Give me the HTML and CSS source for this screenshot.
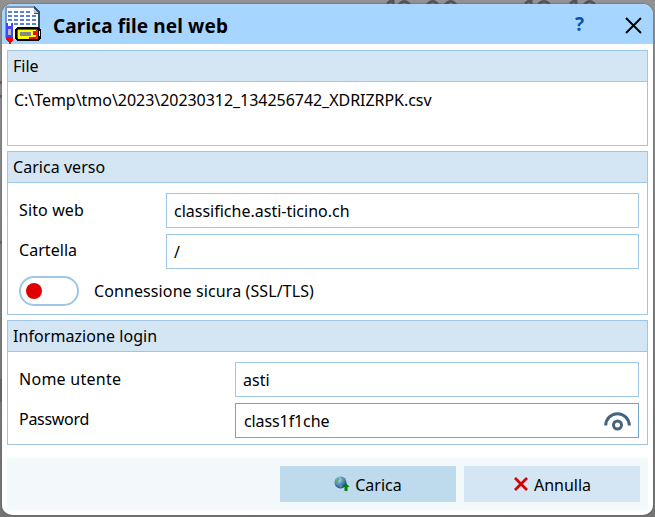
FILE: index.html
```
<!DOCTYPE html>
<html lang="it">
<head>
<meta charset="utf-8">
<title>Carica file nel web</title>
<link rel="stylesheet" href="styles.css">
</head>
<body>
<div class="backdrop" aria-hidden="true">
  <svg class="traces" width="216" height="4" viewBox="0 0 216 4" fill="none" stroke="#555" stroke-width="3">
    <path d="M4 4L9 0M10 0V4M16 5Q21 -2 27 5M44 5Q50 -2 55 5M62 5Q68 -2 73 5M142 4L147 0M148 0V4M155 5Q161 -2 167 5M187 4L192 0M193 0V4M201 5Q207 -2 212 5"/>
  </svg>
  <i class="mark mark-a"></i><i class="mark mark-b"></i><i class="mark mark-c"></i><i class="mark mark-d"></i>
</div>
<main class="dialog">
  <header class="titlebar">
    <svg class="app-icon" width="38" height="40" viewBox="0 0 38 40" shape-rendering="crispEdges">
      <path d="M2 3H29L34 9V35H2Z" fill="#fff"/>
      <path d="M1 2H29V4H2V34H0V3Z" fill="#8096b5"/>
      <path d="M29 2L35 8V24H33V10H29Z" fill="#344b73"/>
      <path d="M29 4V9H33Z" fill="#b7c8df"/>
      <path d="M3 8H27M3 12H31M3 16H31M3 20H31" stroke="#5683d4" stroke-width="2" stroke-dasharray="4 2"/>
      <path d="M1 19H3V21H6V19H8V33H1Z" fill="#4444ff"/>
      <path d="M3 19H6V22H3Z" fill="#fff"/>
      <path d="M3 25H6V31H3Z" fill="#bbb"/>
      <path d="M1 33H8V36L6 38V40H4V38L1 36Z" fill="red"/>
      <path d="M12 23H33L36 26V34L33 37H12L10 35V25Z" fill="#000"/>
      <path d="M13 25H31L33 27V35H13L12 34V26Z" fill="#e20"/>
      <path d="M13 26H31V35H13Z" fill="#ff0"/>
      <path d="M15 28H26V32H15Z" fill="#888"/>
      <path d="M28 27H31V31H28ZM24 33H31V35H24Z" fill="#e00"/>
      <path d="M34 27H35V32H34Z" fill="#fff"/>
    </svg>
    <h1><span class="t-title">Carica file nel web</span></h1>
    <span class="help">?</span>
    <svg class="close" width="17" height="17" viewBox="0 0 17 17"><path d="M1 1L16 16M16 1L1 16" stroke="#000" stroke-width="1.9"/></svg>
  </header>
  <section class="panel panel-file">
    <h2><span class="t-file">File</span></h2>
    <p class="path"><span class="t-path">C:\Temp\tmo\2023\20230312_134256742_XDRIZRPK.csv</span></p>
  </section>
  <section class="panel panel-target">
    <h2><span class="t-verso">Carica verso</span></h2>
    <div class="row"><label class="t-sito">Sito web</label><div class="field"><span class="t-site">classifiche.asti-ticino.ch</span></div></div>
    <div class="row"><label class="t-cart">Cartella</label><div class="field"><span>/</span></div></div>
    <div class="secure"><span class="switch"></span><span class="t-ssl">Connessione sicura (SSL/TLS)</span></div>
  </section>
  <section class="panel panel-login">
    <h2><span class="t-info">Informazione login</span></h2>
    <div class="row"><label class="t-nome">Nome utente</label><div class="field"><span class="t-asti">asti</span></div></div>
    <div class="row"><label class="t-pass">Password</label><div class="field active"><span class="t-pw">class1f1che</span>
      <svg class="eye" width="27" height="20" viewBox="0 0 27 20" fill="none" stroke="#46657c" stroke-width="3"><path d="M1.7 14.5A11.7 11.7 0 0 1 25.3 14.5"/><circle cx="13.5" cy="14" r="4"/></svg></div></div>
  </section>
  <footer class="actions">
    <button class="btn primary">
      <svg width="16" height="16" viewBox="0 0 16 16"><defs><radialGradient id="globe" cx=".35" cy=".28" r=".75"><stop offset="0" stop-color="#d8ebff"/><stop offset=".4" stop-color="#6598d4"/><stop offset="1" stop-color="#174897"/></radialGradient></defs><circle cx="6.5" cy="6.5" r="6" fill="url(#globe)"/><path d="M1 4L4 1.5L6 3L3.5 7L1 7ZM8 1L12 4L9 6ZM5 9L8 8L8 11L6 12Z" fill="#58a65b" opacity=".8"/><path d="M12 7L15.5 11H13.5V15H10.5V11H8.5Z" fill="#077b0b"/></svg>
      <span class="t-carica">Carica</span>
    </button>
    <button class="btn"><svg width="16" height="16" viewBox="0 0 16 16"><path d="M2 2L14 14M14 2L2 14" stroke="#d60000" stroke-width="2.8"/></svg><span class="t-annulla">Annulla</span></button>
  </footer>
</main>
</body>
</html>
```
FILE: styles.css
```
* { box-sizing: border-box; }
body {
  margin: 0;
  width: 655px;
  height: 517px;
  padding: 4px 2px 2px;
  overflow: hidden;
  background: linear-gradient(#929292, #828282 50%, #747474);
  color: #000;
  font: 16px/22px "Noto Sans", "Open Sans", sans-serif;
}
h1, h2, p { margin: 0; font-weight: 400; }
.backdrop { position: absolute; inset: 0; overflow: hidden; }
.traces { position: absolute; top: 0; left: 383px; }
.mark { position: absolute; left: 0; width: 2px; height: 3px; background: #666; }
.mark-a { top: 81px; }
.mark-b { top: 95px; }
.mark-c { top: 241px; }
.mark-d { top: 379px; height: 23px; }
.dialog {
  position: relative;
  height: 511px;
  width: 651px;
  background: #fff;
  border-radius: 10px;
  overflow: hidden;
  box-shadow: 0 0 2px #555;
}
.titlebar { display: flex; align-items: center; height: 40px; background: #a6d6ff; padding: 0 11px 0 3px; }
.app-icon { margin-top: 0; }
h1 { flex: 1; margin: 4px 0 0 10px; font-size: 19px; font-weight: 700; line-height: 26px; }
.help { width: 12px; margin-right: 38px; color: #0b56a6; font-size: 19px; font-weight: 700; }
.close { flex: none; margin-top: 2px; }
.panel { margin: 0 5px; border: 1px solid #a0c6e5; }
.panel-file { height: 96px; margin-top: 6px; }
.panel-target { height: 164px; margin-top: 5px; }
.panel-login { height: 125px; margin-top: 5px; }
h2 { height: 31px; padding: 4px 5px; background: #d4e6f4; border-bottom: 1px solid #a0c6e5; font-size: 16px; line-height: 22px; }
.path { padding: 7px 6px; }
.row { display: flex; height: 35px; margin: 6px 8px 0 11px; }
h2 + .row { margin-top: 10px; }
label { width: 147px; padding-top: 5px; }
h2 + .row label { padding-top: 6px; }
.panel-login label { width: 216px; }
.field { flex: 1; display: flex; align-items: center; border: 1px solid #a0c6e5; padding: 1px 7px 0; }
.field.active { border-color: #74a5cc; padding: 1px 7px 0 8px; }
.eye { margin: 0 0 0 auto; }
.secure { display: flex; align-items: center; height: 30px; margin: 7px 11px; }
.switch { width: 60px; height: 30px; margin-right: 15px; border: 2px solid #a0c6e5; border-radius: 15px; }
.switch::before { content: ""; display: block; width: 16px; height: 16px; margin: 5px; border-radius: 50%; background: #e10000; }
.actions { display: flex; justify-content: flex-end; gap: 8px; margin: 13px 5px 0; height: 52px; padding: 8px; background: #f3f8fb; }
.btn { width: 176px; height: 36px; display: flex; align-items: center; justify-content: center; gap: 5px; padding: 1px 0 0; border: 0; background: #d4e6f4; color: #000; font: inherit; }
.btn.primary { background: #bedaed; }
.btn svg { margin-bottom: 2px; }
.t-title { letter-spacing: .12px; }
.t-path { letter-spacing: -.04px; }
.t-verso { letter-spacing: .04px; }
.t-sito { letter-spacing: .12px; }
.t-cart { letter-spacing: .05px; }
.t-ssl { letter-spacing: .1px; }
.t-info { letter-spacing: .06px; }
.t-nome { letter-spacing: .27px; }
.t-pass { letter-spacing: -.3px; }
.t-pw { letter-spacing: -.1px; }
```
